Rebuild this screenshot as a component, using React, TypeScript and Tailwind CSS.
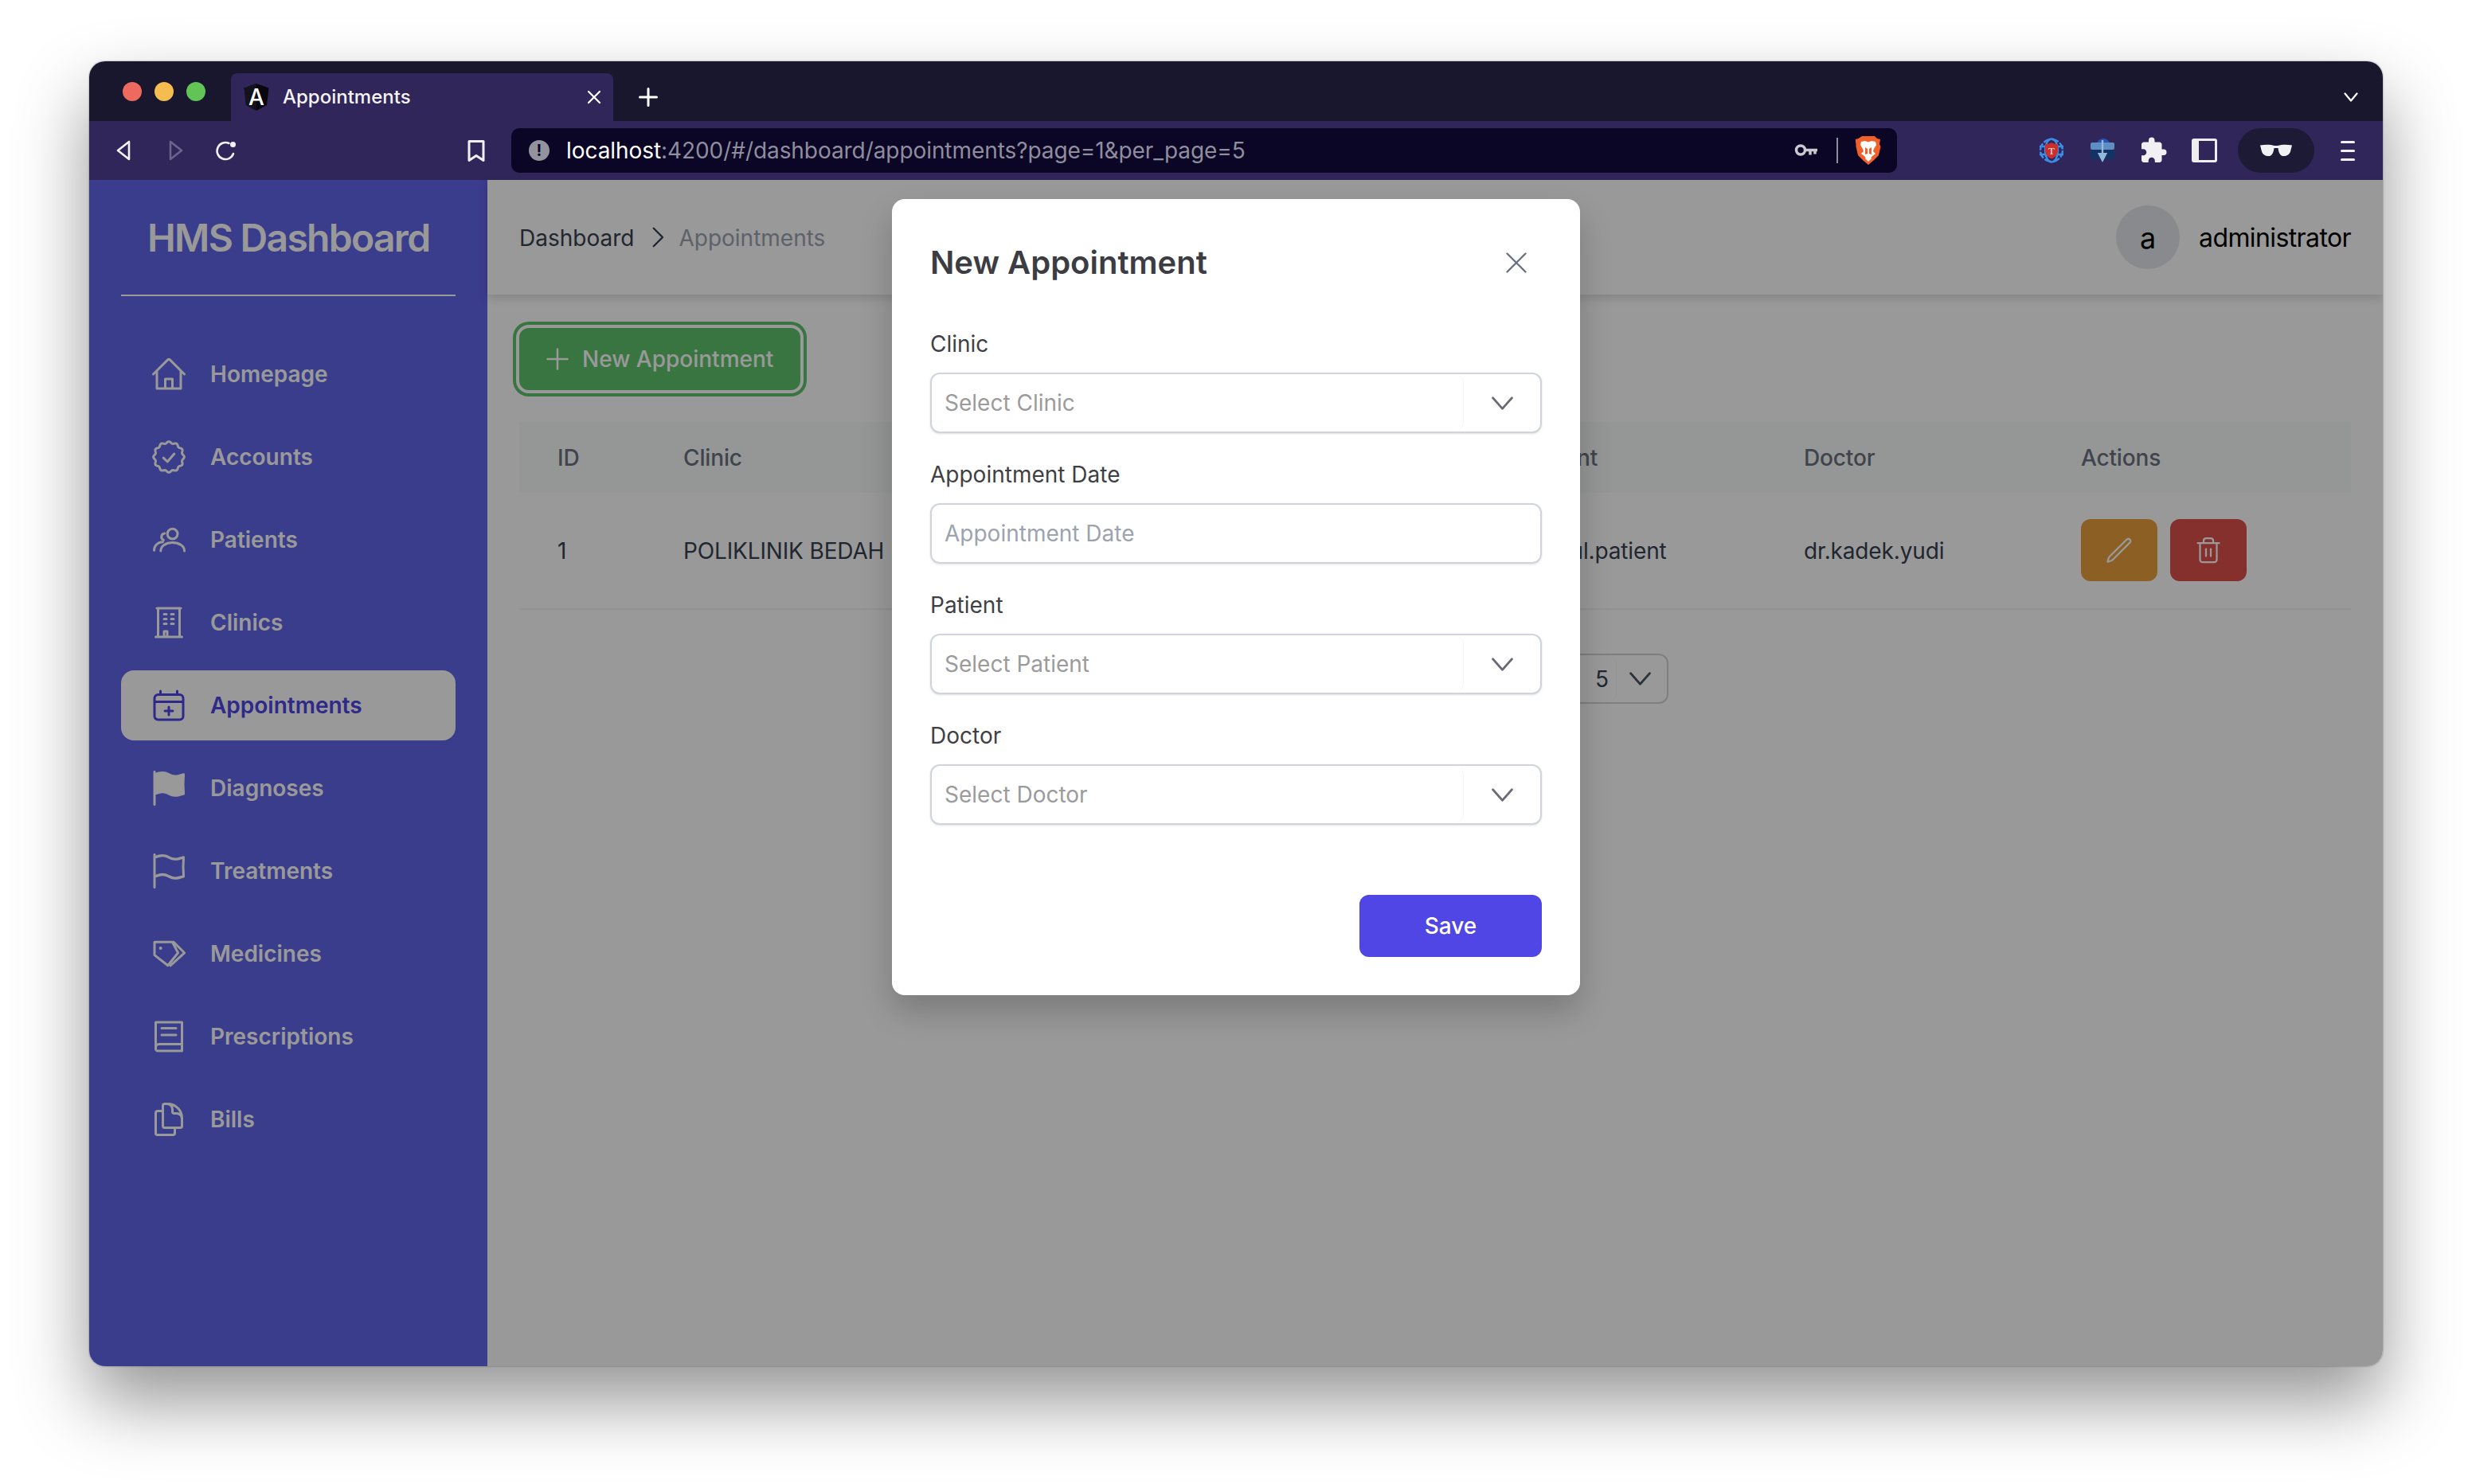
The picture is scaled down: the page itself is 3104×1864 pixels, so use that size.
import { Trash2 } from "lucide-react";
import { MdExtension } from "react-icons/md";

const badgePoints = Array.from({ length: 145 }, (_, i) => {
  const a = (i / 144) * Math.PI * 2;
  const r = 9.15 + 0.55 * Math.cos(a * 12);
  return `${(12 + r * Math.cos(a)).toFixed(2)},${(12 + r * Math.sin(a)).toFixed(2)}`;
}).join(" ");

const flagPath =
  "M3 3v1.5M3 21v-6m0 0l2.77-.693a9 9 0 016.208.682l.108.054a9 9 0 006.086.71l3.114-.732a48.524 48.524 0 01-.005-10.499l-3.11.732a9 9 0 01-6.085-.711l-.108-.054a9 9 0 00-6.208-.682L3 4.5M3 15V4.5";

function NavIcon({ name }: { name: string }) {
  const common = {
    viewBox: "0 0 24 24",
    fill: "none",
    stroke: "currentColor",
    strokeWidth: 1.5,
    strokeLinecap: "round" as const,
    strokeLinejoin: "round" as const,
    className: "w-12 h-12 shrink-0",
  };
  switch (name) {
    case "home":
      return (
        <svg {...common}>
          <path d="M2.25 12l8.954-8.955c.44-.439 1.152-.439 1.591 0L21.75 12M4.5 9.75V21h15V9.75M9.75 21v-6h4.5v6" />
        </svg>
      );
    case "badge":
      return (
        <svg {...common}>
          <polyline points={badgePoints} />
          <path d="M8.6 12.6l2.5 2.4 4.3-5" />
        </svg>
      );
    case "users":
      return (
        <svg {...common}>
          <circle cx="14.3" cy="8.3" r="3.2" />
          <path d="M9.3 8a2.2 2.2 0 00-.6 4.2M2.8 18.6c0-3 2.4-5.2 5.4-5.2M6.9 19c0-3.2 3.2-5.2 7.4-5.2s7.5 2 7.5 5.2" />
        </svg>
      );
    case "building":
      return (
        <svg {...common}>
          <path d="M3.75 21h16.5M4.5 3h15M5.25 3v18M18.75 3v18M9 6.75h1.5M9 9.75h1.5M9 12.75h1.5M13.5 6.75H15M13.5 9.75H15M13.5 12.75H15M9 21v-3.5h2V21" />
        </svg>
      );
    case "calendar":
      return (
        <svg {...common}>
          <path d="M6.75 3v2.25M17.25 3v2.25M3 7.5a2.25 2.25 0 012.25-2.25h13.5A2.25 2.25 0 0121 7.5v11.25A2.25 2.25 0 0118.75 21H5.25A2.25 2.25 0 013 18.75V7.5zM3 9.75h18M12 13v5M9.5 15.5h5" />
        </svg>
      );
    case "flagSolid":
      return (
        <svg {...common} fill="currentColor">
          <g transform="translate(0 -1.7) scale(1 1.14)">
            <path d={flagPath} />
          </g>
        </svg>
      );
    case "flag":
      return (
        <svg {...common}>
          <g transform="translate(0 -1.7) scale(1 1.14)">
            <path d={flagPath} />
          </g>
        </svg>
      );
    case "tags":
      return (
        <svg {...common}>
          <path d="M3 4.6h11.2l3.600 6.800-6.400 8L3 12.800z" />
          <path d="M15 4.600l6.800 6.800-8.800 8" />
          <path d="M6.800 8.500h.01" strokeWidth="2" />
        </svg>
      );
    case "book":
      return (
        <svg {...common}>
          <path d="M3.75 3h16.5v18H5a1.25 1.25 0 01-1.25-1.25V3zM3.75 19c0-1.3.8-2.2 2-2.2h14.5M7.5 6.75h9M7.5 11h9" />
        </svg>
      );
    default:
      return (
        <svg {...common}>
          <path d="M15.75 17.25v3.375c0 .621-.504 1.125-1.125 1.125h-9.75a1.125 1.125 0 01-1.125-1.125V7.875c0-.621.504-1.125 1.125-1.125H6.75a9.06 9.06 0 011.5.124m7.5 10.376h3.375c.621 0 1.125-.504 1.125-1.125V11.25c0-4.46-3.243-8.161-7.5-8.876a9.06 9.06 0 00-1.5-.124H9.375c-.621 0-1.125.504-1.125 1.125v3.5m7.5 10.375H9.375a1.125 1.125 0 01-1.125-1.125v-9.25m12 6.625v-1.875a3.375 3.375 0 00-3.375-3.375h-1.5a1.125 1.125 0 01-1.125-1.125v-1.5a3.375 3.375 0 00-3.375-3.375H9.75" />
        </svg>
      );
  }
}

const navItems = [
  { label: "Homepage", icon: "home" },
  { label: "Accounts", icon: "badge" },
  { label: "Patients", icon: "users" },
  { label: "Clinics", icon: "building" },
  { label: "Appointments", icon: "calendar", active: true },
  { label: "Diagnoses", icon: "flagSolid" },
  { label: "Treatments", icon: "flag" },
  { label: "Medicines", icon: "tags" },
  { label: "Prescriptions", icon: "book" },
  { label: "Bills", icon: "files" },
];

function Chevron({ className }: { className: string }) {
  return (
    <svg viewBox="0 0 26 16" fill="none" stroke="currentColor" strokeWidth="2.6" strokeLinecap="round" strokeLinejoin="round" className={className}>
      <path d="M1.5 1.5L13 14.5 24.5 1.5" />
    </svg>
  );
}

function AngularIcon() {
  return (
    <svg viewBox="0 0 32 34" className="w-8 h-[34px] shrink-0">
      <path d="M16 0L31.5 5.5 29 27 16 34 3 27 .5 5.5z" fill="#08070d" />
      <path d="M16 0L.5 5.5 3 27 16 34z" fill="#14131b" />
      <text x="16" y="27" textAnchor="middle" fontSize="28" fontWeight="500" fill="#fff" fontFamily="Inter, sans-serif">
        A
      </text>
    </svg>
  );
}

function BrowserTabs() {
  return (
    <div className="h-[75px] bg-[#19172e] flex pl-[42px]">
      <div className="flex items-center gap-4">
        <span className="w-6 h-6 rounded-full bg-[#ee6a5f]" />
        <span className="w-6 h-6 rounded-full bg-[#f5bd4f]" />
        <span className="w-6 h-6 rounded-full bg-[#61c454]" />
      </div>
      <div className="ml-8 self-end w-[480px] h-[60px] bg-[#312659] rounded-t-lg flex items-center pl-4 pr-[15px] text-white">
        <AngularIcon />
        <span className="ml-[17px] text-2xl font-medium leading-8 text-[#f4f4f6]">Appointments</span>
        <svg viewBox="0 0 18 18" fill="none" stroke="currentColor" strokeWidth="2.2" strokeLinecap="round" className="ml-auto w-[18px] h-[18px]">
          <path d="M2 2l14 14M16 2L2 16" />
        </svg>
      </div>
      <div className="ml-8 self-end h-[60px] flex items-center text-white">
        <svg viewBox="0 0 24 24" fill="none" stroke="currentColor" strokeWidth="3" strokeLinecap="round" className="w-6 h-6">
          <path d="M12 1.5v21M1.5 12h21" />
        </svg>
      </div>
      <div className="ml-auto self-end h-[60px] flex items-center pr-[31px] text-white">
        <svg viewBox="0 0 18 12" fill="none" stroke="currentColor" strokeWidth="2.2" strokeLinecap="round" strokeLinejoin="round" className="w-[18px] h-3">
          <path d="M1.5 1.5L9 10.5l7.5-9" />
        </svg>
      </div>
    </div>
  );
}

function BraveIcon() {
  return (
    <svg viewBox="0 0 32 38" className="w-8 h-[38px]">
      <path d="M8 1h16l3 3 4 1-1 6 1.500 3-2.500 11-7 7-6 5-6-5-7-7-2.500-11L.5 11l-1-6 4-1z" fill="#f1602a" />
      <path d="M7 8l5-1 4 1.500L20 7l5 1 1 4-3 5-1 3 3 3-5 4 -1 3h-6l-1-3-5-4 3-3-1-3-3-5z" fill="#fff" />
      <path d="M12 15l3 2v6l-3 1zM20 15l-3 2v6l3 1z" fill="#f1602a" />
      <path d="M12 29h8l-4 4z" fill="#fff" />
    </svg>
  );
}

function GlobeShieldIcon() {
  return (
    <svg viewBox="0 0 32 32" className="w-8 h-8">
      <g fill="none" stroke="#3b8ee8" strokeWidth="2.500">
        <ellipse cx="16" cy="16" rx="14" ry="14" strokeDasharray="9 2" />
        <ellipse cx="16" cy="16" rx="8" ry="14.500" />
        <path d="M1 11h30M1 21h30" />
      </g>
      <path d="M16 6c3 1.800 5 2.200 8 2.200V16c0 5-3 8-8 10.500-5-2.500-8-5.500-8-10.500V8.200c3 0 5-.4 8-2.200z" fill="#c9302f" />
      <text x="16" y="20.500" textAnchor="middle" fontSize="13" fill="#f6e9e9" fontFamily="Liberation Serif, serif">
        T
      </text>
    </svg>
  );
}

function DownloadBoxIcon() {
  return (
    <svg viewBox="0 0 32 30" className="w-8 h-[30px]">
      <circle cx="17" cy="9" r="9" fill="#2a55b4" />
      <rect x="1" y="5" width="30" height="9" rx="2" fill="#5f8fc2" />
      <rect x="1" y="14" width="30" height="12" rx="1" fill="#123364" />
      <path d="M14.800 2h2.400v16h5L16 30l-6.200-12h5z" fill="#94b9dc" />
    </svg>
  );
}

function BrowserToolbar() {
  return (
    <div className="h-[74px] bg-[#312659] flex items-center pl-[28px]">
      <div className="flex gap-8 items-center">
        <svg viewBox="0 0 32 32" fill="none" stroke="#f1f1f4" strokeWidth="2.600" strokeLinejoin="round" className="w-8 h-8">
          <path d="M22 5v22L8 16z" />
        </svg>
        <svg viewBox="0 0 32 32" fill="none" stroke="#6c648d" strokeWidth="2.600" strokeLinejoin="round" className="w-8 h-8">
          <path d="M10 5v22l14-11z" />
        </svg>
        <svg viewBox="0 0 32 32" fill="none" stroke="#f1f1f4" strokeWidth="2.600" strokeLinecap="round" className="w-8 h-8">
          <path d="M25 20a10.500 10.500 0 11-5.500-13" />
          <circle cx="24.500" cy="8.500" r="3.500" fill="#f1f1f4" stroke="none" />
        </svg>
      </div>
      <svg viewBox="0 0 32 32" fill="none" stroke="#f1f1f4" strokeWidth="3" strokeLinejoin="round" className="ml-[282px] w-8 h-8">
        <path d="M7 4.500h18v24l-9-6-9 6z" />
      </svg>
      <div className="ml-7 w-[1740px] h-14 bg-[#0b0625] rounded-[10px] flex items-center pl-[22px] pr-5">
        <span className="w-[26px] h-[26px] rounded-full bg-[#92939c] flex items-center justify-center text-[#0b0625] text-xl font-bold leading-none">!</span>
        <span className="ml-[21px] text-[28px] leading-10 tracking-[-0.07px] text-white">
          localhost<span className="text-[#8f8d9e]">:4200/#/dashboard/appointments?page=1&amp;per_page=5</span>
        </span>
        <svg viewBox="0 0 32 32" fill="none" stroke="#c9c9ce" strokeWidth="3.500" className="ml-auto w-8 h-8">
          <circle cx="9" cy="15.500" r="5.500" />
          <path d="M15 15.500h15M21 15.500v6M27 15.500v5" />
        </svg>
        <span className="ml-[22px] w-0.5 h-8 bg-[#8f8d9e]" />
        <span className="ml-[22px]">
          <BraveIcon />
        </span>
      </div>
      <div className="ml-[176px] flex items-center gap-7">
        <span className="w-9 flex justify-center">
          <GlobeShieldIcon />
        </span>
        <span className="w-9 flex justify-center">
          <DownloadBoxIcon />
        </span>
        <span className="w-9 flex justify-center">
          <MdExtension className="w-9 h-9 text-[#f1f1f4]" />
        </span>
        <span className="w-9 flex justify-center">
          <span className="w-8 h-[30px] rounded-[3px] border-[3px] border-l-[9px] border-[#eeeeef]" />
        </span>
      </div>
      <div className="ml-6 w-24 h-14 rounded-full bg-[#1d1a36] flex items-center justify-center">
        <svg viewBox="0 0 40 16" className="w-10 h-4">
          <path d="M0 1.500c6-1 13-1 18 .5h4c5-1.500 12-1.500 18-.5l-1.800 7C37 14 32 15.500 28.500 15 25 14.500 23 10 22.500 5h-5C17 10 15 14.500 11.500 15 8 15.500 3 14 1.800 8.500z" fill="#f1f1f4" />
        </svg>
      </div>
      <div className="ml-[33px] w-[18px] flex flex-col gap-[8px]">
        <span className="h-[3px] rounded-full bg-[#f1f1f4]" />
        <span className="h-[3px] rounded-full bg-[#f1f1f4]" />
        <span className="h-[3px] rounded-full bg-[#f1f1f4]" />
      </div>
    </div>
  );
}

function Sidebar() {
  return (
    <aside className="w-[500px] shrink-0 bg-[#6264ea] px-10 flex flex-col">
      <div className="h-[146px] border-b-2 border-white flex items-center pl-[33px]">
        <h1 className="pt-[2px] text-5xl font-semibold text-white leading-none tracking-[-1.7px]">HMS Dashboard</h1>
      </div>
      <nav className="mt-[54px] flex flex-col gap-4">
        {navItems.map((item) => (
          <div
            key={item.label}
            className={
              item.active
                ? "h-[88px] rounded-2xl bg-white text-[#4f46e5] flex items-center pl-9 gap-7"
                : "h-[88px] rounded-2xl text-white flex items-center pl-9 gap-7"
            }
          >
            <NavIcon name={item.icon} />
            <span className="text-[28px] font-semibold leading-10">{item.label}</span>
          </div>
        ))}
      </nav>
    </aside>
  );
}

function Topbar() {
  return (
    <header className="h-36 shrink-0 bg-white shadow-[0_4px_12px_rgba(0,0,0,0.15)] flex items-center px-10">
      <span className="pt-[2px] text-[28px] leading-10 text-[#374151]">Dashboard</span>
      <svg viewBox="0 0 24 24" fill="none" stroke="#374151" strokeWidth="1.600" strokeLinecap="round" strokeLinejoin="round" className="ml-3 w-9 h-9">
        <path d="M8.500 4.500L16 12l-7.500 7.500" />
      </svg>
      <span className="ml-[8px] pt-[2px] text-[28px] leading-10 text-[#9ca3af]">Appointments</span>
      <div className="ml-auto w-20 h-20 rounded-full bg-[#e5e7eb] flex items-center justify-center pt-[2px] text-4xl text-black">a</div>
      <span className="ml-6 pt-[2px] text-[32px] leading-10 tracking-[-0.6px] text-black">administrator</span>
    </header>
  );
}

function AppointmentsTable() {
  return (
    <table className="w-[2300px] table-fixed border-collapse mt-10 text-[28px] leading-10 tracking-[-0.15px]">
      <colgroup>
        <col className="w-[158px]" />
        <col className="w-[501px]" />
        <col className="w-[555px]" />
        <col className="w-[351px]" />
        <col className="w-[348px]" />
        <col className="w-[387px]" />
      </colgroup>
      <thead>
        <tr className="h-[89px] bg-[#f9fafb] text-[#6b7280] text-left">
          <th className="pl-12 font-medium">ID</th>
          <th className="pl-12 font-medium">Clinic</th>
          <th className="pl-12 font-medium">Appointment Date</th>
          <th className="pl-12 font-medium">Patient</th>
          <th className="pl-12 font-medium">Doctor</th>
          <th className="pl-12 font-medium">Actions</th>
        </tr>
      </thead>
      <tbody>
        <tr className="h-[146px] border-b-2 border-[#f3f4f6] text-[#374151]">
          <td className="pl-12">1</td>
          <td className="pl-12 whitespace-nowrap overflow-hidden">POLIKLINIK BEDAH UMUM</td>
          <td className="pl-12">2022-11-20</td>
          <td className="pl-14">abdul.patient</td>
          <td className="pl-12">dr.kadek.yudi</td>
          <td className="pl-12 pb-[2px]">
            <div className="flex gap-4">
              <button className="w-24 h-[78px] rounded-xl bg-[#e9a03c] text-white flex items-center justify-center">
                <svg viewBox="0 0 24 24" fill="none" stroke="currentColor" strokeWidth="1.500" strokeLinecap="round" strokeLinejoin="round" className="w-9 h-9">
                  <path d="M16.900 4.500l1.700-1.700a1.900 1.900 0 012.600 2.600L6.800 19.800a4.500 4.500 0 01-1.900 1.200l-2.600.7.700-2.600a4.500 4.500 0 011.200-1.900z" />
                </svg>
              </button>
              <button className="w-24 h-[78px] rounded-xl bg-[#de504b] text-white flex items-center justify-center">
                <Trash2 className="w-9 h-9" strokeWidth={1.5} />
              </button>
            </div>
          </td>
        </tr>
      </tbody>
    </table>
  );
}

function Field({ label, children }: { label: string; children: React.ReactNode }) {
  return (
    <div className="flex flex-col gap-4">
      <label className="text-[28px] leading-10 text-[#3f3f46]">{label}</label>
      {children}
    </div>
  );
}

function SelectBox({ placeholder }: { placeholder: string }) {
  return (
    <div className="h-[76px] rounded-xl border-2 border-[#d1d5db] bg-white flex shadow-sm">
      <div className="w-[668px] pl-4 flex items-center text-[28px] text-[#9b9b9b] border-r border-[#f4f4f5] rounded-r-xl">{placeholder}</div>
      <div className="flex-1 flex items-center justify-center text-[#6b6b75]">
        <Chevron className="w-[27px] h-[17px]" />
      </div>
    </div>
  );
}

function NewAppointmentModal() {
  return (
    <div className="w-[864px] h-[1000px] mt-6 bg-white rounded-2xl shadow-[0_20px_40px_rgba(0,0,0,0.2)] px-12 flex flex-col">
      <div className="h-[160px] mb-[2px] flex items-center justify-between shrink-0">
        <h2 className="text-[40px] font-semibold leading-[56px] text-[#3c3c43]">New Appointment</h2>
        <svg viewBox="0 0 26 26" fill="none" stroke="#6b7280" strokeWidth="2.400" strokeLinecap="round" className="w-[26px] h-[26px] mr-[19px]">
          <path d="M1.500 1.500l23 23M24.500 1.500l-23 23" />
        </svg>
      </div>
      <div className="flex flex-col gap-8">
        <Field label="Clinic">
          <SelectBox placeholder="Select Clinic" />
        </Field>
        <Field label="Appointment Date">
          <input
            placeholder="Appointment Date"
            className="h-[76px] rounded-xl border-2 border-[#d1d5db] px-4 text-[28px] shadow-sm placeholder:text-[#9ca3af] outline-none"
          />
        </Field>
        <Field label="Patient">
          <SelectBox placeholder="Select Patient" />
        </Field>
        <Field label="Doctor">
          <SelectBox placeholder="Select Doctor" />
        </Field>
      </div>
      <div className="mt-[88px] flex justify-end">
        <button className="w-[229px] h-[78px] rounded-xl bg-[#4f46e5] text-white text-[28px] font-medium">Save</button>
      </div>
    </div>
  );
}

export default function App() {
  return (
    <div className="w-[3104px] h-[1864px] bg-white pt-[77px] pl-[112px] overflow-hidden font-['Inter',sans-serif]">
      <div className="w-[2880px] h-[1639px] rounded-[20px] overflow-hidden flex flex-col shadow-[0_44px_90px_rgba(0,0,0,0.42),0_0_2px_rgba(0,0,0,0.5)]">
        <BrowserTabs />
        <BrowserToolbar />
        <div className="relative flex-1 flex min-h-0 bg-white">
          <Sidebar />
          <main className="flex-1 flex flex-col min-w-0">
            <Topbar />
            <div className="px-10 pt-[42px]">
              <button className="w-[353px] h-[78px] rounded-xl bg-[#60c36b] text-white ring-4 ring-[#60c36b] ring-offset-4 ring-offset-white flex items-center pl-7 text-[28px] font-medium">
                <svg viewBox="0 0 24 24" fill="none" stroke="currentColor" strokeWidth="1.500" strokeLinecap="round" className="w-10 h-10 mr-[11px]">
                  <path d="M12 4.500v15M4.500 12h15" />
                </svg>
                New Appointment
              </button>
              <AppointmentsTable />
              <div className="mt-[55px] w-[1443px] h-[63px] flex justify-end items-center">
                <span className="mr-6 text-[28px] text-[#374151]">Rows per page</span>
                <div className="w-[155px] h-[63px] rounded-xl border-2 border-[#d1d5db] flex items-center text-[28px] text-[#374151]">
                  <span className="w-[88px] h-full pr-[9px] flex items-center justify-end border-r border-[#f3f4f6] rounded-r-xl">5</span>
                  <span className="flex-1 flex justify-center pr-1 text-[#4b5563]">
                    <Chevron className="w-[27px] h-[17px]" />
                  </span>
                </div>
              </div>
            </div>
          </main>
          <div className="absolute inset-0 bg-black/40 flex justify-center items-start">
            <NewAppointmentModal />
          </div>
        </div>
      </div>
    </div>
  );
}
